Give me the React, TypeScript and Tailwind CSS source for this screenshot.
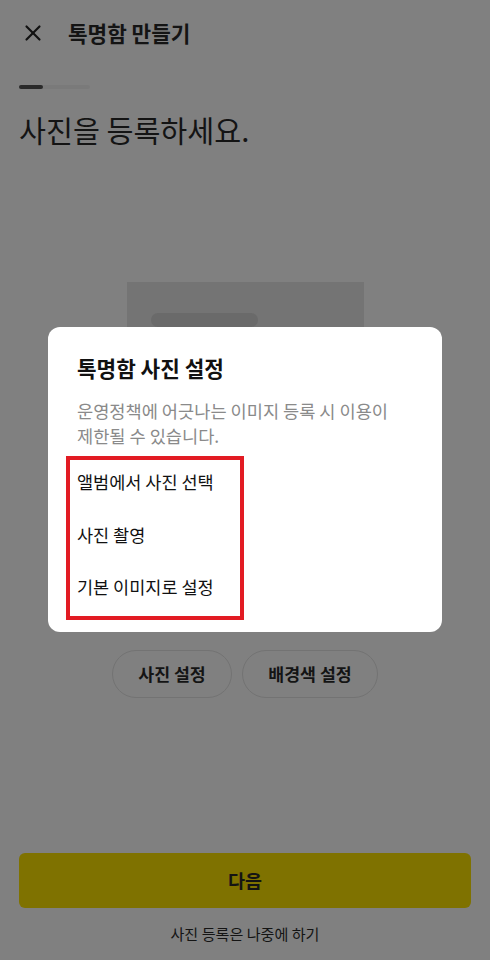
import { X } from "lucide-react"

const font = { fontFamily: '"Noto Sans CJK KR", "Noto Sans", sans-serif' }

const options = ["앨범에서 사진 선택", "사진 촬영", "기본 이미지로 설정"]

const PhotoDialog = () => {
  return (
    <div className="absolute left-[48px] top-[327px] w-[394px] h-[305px] rounded-[12px] bg-white pl-[29px] pr-4 pt-[25px]">
      <h2 className="text-[21.3px] font-bold leading-[32px] text-[#111]">톡명함 사진 설정</h2>
      <p className="mt-[14px] text-[17.6px] leading-[25px] text-[#8a8a8a]">
        운영정책에 어긋나는 이미지 등록 시 이용이
        <br />
        제한될 수 있습니다.
      </p>
      <div className="mt-[8px] -ml-[11px] w-[178px] h-[164px] border-[4px] border-[#e21b23] pl-[7px] pt-[8px]">
        {options.map((label) => (
          <div key={label} className="h-[52.5px] text-[17.5px] leading-[28px] text-[#111]">
            {label}
          </div>
        ))}
      </div>
    </div>
  )
}

export default function App() {
  return (
    <div className="relative h-[960px] w-[490px] overflow-hidden bg-[#808080]" style={font}>
      <div className="flex h-[66px] items-center px-[20px]">
        <X size={26} strokeWidth={2} className="text-[#111]" />
        <span className="ml-[22px] text-[21.3px] font-bold text-[#141414]">톡명함 만들기</span>
      </div>

      <div className="mx-[19px] mt-[19px] flex h-[4px] w-[71px] rounded-full bg-[#7a7a7a]">
        <div className="h-full w-[24px] rounded-full bg-[#2a2a2a]" />
      </div>

      <h1 className="mx-[19px] mt-[20px] text-[29.3px] leading-[40px] text-[#141414]">사진을 등록하세요.</h1>

      <div className="mt-[133px] flex justify-center">
        <div className="h-[340px] w-[237px] bg-[#747474] pt-[31px] pl-[24px]">
          <div className="h-[14px] w-[107px] rounded-full bg-[#6a6a6a]" />
        </div>
      </div>

      <div className="mt-[28px] flex justify-center gap-[10px]">
        <button className="h-[48px] w-[120px] rounded-full border border-[#737373] text-[17.3px] font-bold text-[#141414]">
          사진 설정
        </button>
        <button className="h-[48px] w-[136px] rounded-full border border-[#737373] text-[17.3px] font-bold text-[#141414]">
          배경색 설정
        </button>
      </div>

      <div className="absolute bottom-0 left-0 right-0 px-[19px] pb-[17px]">
        <button className="h-[55px] w-full rounded-[6px] bg-[#7f7200] text-[18.5px] font-bold text-[#141414]">
          다음
        </button>
        <div className="mt-[15px] text-center text-[15.1px] leading-[20px] text-[#141414]">
          사진 등록은 나중에 하기
        </div>
      </div>

      <PhotoDialog />
    </div>
  )
}
